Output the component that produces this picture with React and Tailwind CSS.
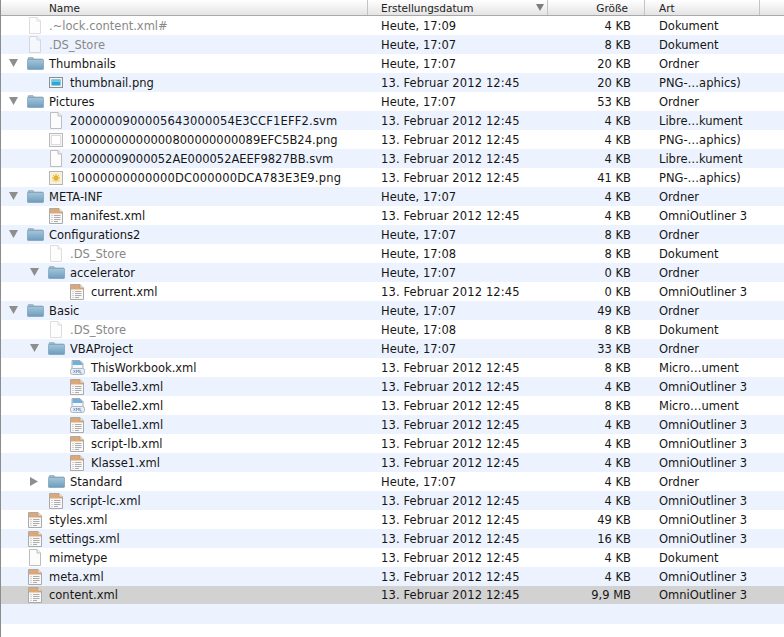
const FONT = 'font-["DejaVu_Sans",sans-serif]';

const ROWS = [
  { name: '.~lock.content.xml#', date: 'Heute, 17:09', size: '4 KB', kind: 'Dokument', level: 0, icon: 'file', dim: true },
  { name: '.DS_Store', date: 'Heute, 17:07', size: '8 KB', kind: 'Dokument', level: 0, icon: 'file', dim: true },
  { name: 'Thumbnails', date: 'Heute, 17:07', size: '20 KB', kind: 'Ordner', level: 0, icon: 'folder', open: true },
  { name: 'thumbnail.png', date: '13. Februar 2012 12:45', size: '20 KB', kind: 'PNG-…aphics)', level: 1, icon: 'thumb' },
  { name: 'Pictures', date: 'Heute, 17:07', size: '53 KB', kind: 'Ordner', level: 0, icon: 'folder', open: true },
  { name: '2000000900005643000054E3CCF1EFF2.svm', date: '13. Februar 2012 12:45', size: '4 KB', kind: 'Libre…kument', level: 1, icon: 'file', wide: true },
  { name: '10000000000000800000000089EFC5B24.png', date: '13. Februar 2012 12:45', size: '4 KB', kind: 'PNG-…aphics)', level: 1, icon: 'blank' },
  { name: '20000009000052AE000052AEEF9827BB.svm', date: '13. Februar 2012 12:45', size: '4 KB', kind: 'Libre…kument', level: 1, icon: 'file' },
  { name: '10000000000000DC000000DCA783E3E9.png', date: '13. Februar 2012 12:45', size: '41 KB', kind: 'PNG-…aphics)', level: 1, icon: 'sun', wide: true },
  { name: 'META-INF', date: 'Heute, 17:07', size: '4 KB', kind: 'Ordner', level: 0, icon: 'folder', open: true },
  { name: 'manifest.xml', date: '13. Februar 2012 12:45', size: '4 KB', kind: 'OmniOutliner 3', level: 1, icon: 'xml' },
  { name: 'Configurations2', date: 'Heute, 17:07', size: '8 KB', kind: 'Ordner', level: 0, icon: 'folder', open: true },
  { name: '.DS_Store', date: 'Heute, 17:08', size: '8 KB', kind: 'Dokument', level: 1, icon: 'file', dim: true },
  { name: 'accelerator', date: 'Heute, 17:07', size: '0 KB', kind: 'Ordner', level: 1, icon: 'folder', open: true },
  { name: 'current.xml', date: '13. Februar 2012 12:45', size: '0 KB', kind: 'OmniOutliner 3', level: 2, icon: 'xml' },
  { name: 'Basic', date: 'Heute, 17:07', size: '49 KB', kind: 'Ordner', level: 0, icon: 'folder', open: true },
  { name: '.DS_Store', date: 'Heute, 17:08', size: '8 KB', kind: 'Dokument', level: 1, icon: 'file', dim: true },
  { name: 'VBAProject', date: 'Heute, 17:07', size: '33 KB', kind: 'Ordner', level: 1, icon: 'folder', open: true },
  { name: 'ThisWorkbook.xml', date: '13. Februar 2012 12:45', size: '8 KB', kind: 'Micro…ument', level: 2, icon: 'excel' },
  { name: 'Tabelle3.xml', date: '13. Februar 2012 12:45', size: '4 KB', kind: 'OmniOutliner 3', level: 2, icon: 'xml' },
  { name: 'Tabelle2.xml', date: '13. Februar 2012 12:45', size: '8 KB', kind: 'Micro…ument', level: 2, icon: 'excel' },
  { name: 'Tabelle1.xml', date: '13. Februar 2012 12:45', size: '4 KB', kind: 'OmniOutliner 3', level: 2, icon: 'xml' },
  { name: 'script-lb.xml', date: '13. Februar 2012 12:45', size: '4 KB', kind: 'OmniOutliner 3', level: 2, icon: 'xml' },
  { name: 'Klasse1.xml', date: '13. Februar 2012 12:45', size: '4 KB', kind: 'OmniOutliner 3', level: 2, icon: 'xml' },
  { name: 'Standard', date: 'Heute, 17:07', size: '4 KB', kind: 'Ordner', level: 1, icon: 'folder', open: false },
  { name: 'script-lc.xml', date: '13. Februar 2012 12:45', size: '4 KB', kind: 'OmniOutliner 3', level: 1, icon: 'xml' },
  { name: 'styles.xml', date: '13. Februar 2012 12:45', size: '49 KB', kind: 'OmniOutliner 3', level: 0, icon: 'xml' },
  { name: 'settings.xml', date: '13. Februar 2012 12:45', size: '16 KB', kind: 'OmniOutliner 3', level: 0, icon: 'xml' },
  { name: 'mimetype', date: '13. Februar 2012 12:45', size: '4 KB', kind: 'Dokument', level: 0, icon: 'file' },
  { name: 'meta.xml', date: '13. Februar 2012 12:45', size: '4 KB', kind: 'OmniOutliner 3', level: 0, icon: 'xml' },
  { name: 'content.xml', date: '13. Februar 2012 12:45', size: '9,9 MB', kind: 'OmniOutliner 3', level: 0, icon: 'xml', selected: true },
];

const INDENT = ['pl-[27px]', 'pl-[48px]', 'pl-[69px]'];
const ARROW_INDENT = ['ml-[8px]', 'ml-[29px]', 'ml-[50px]'];
const CELL_TEXT = 'whitespace-nowrap leading-[14px]';

function PageIcon({ dim }) {
  return (
    <svg width="12" height="17" viewBox="0 0 12 17" className={`ml-[1px] ${dim ? 'opacity-50' : ''}`}>
      <path d="M.5.5h7.500l3.500 3.500v12.500h-11z" fill="#fcfcfc" stroke="#bdbdbd" />
      <path d="M8 .5v3.500h3.500" fill="#efefef" stroke="#bdbdbd" />
    </svg>
  );
}

function FolderIcon() {
  return (
    <svg width="17" height="13" viewBox="0 0 17 13" className="-ml-[1px]">
      <defs>
        <linearGradient id="folderBody" x1="0" y1="0" x2="0" y2="1">
          <stop offset="0" stopColor="#a6c6da" />
          <stop offset="1" stopColor="#6b9cbc" />
        </linearGradient>
      </defs>
      <path d="M1 3v-1.500q0-1 1-1h4l1.500 1.500h7.500q1 0 1 1v1z" fill="#9dbbce" stroke="#7a9db3" strokeWidth=".5" />
      <rect x=".4" y="2.400" width="16.200" height="10.200" rx="1" fill="url(#folderBody)" stroke="#6f93a9" strokeWidth=".6" />
    </svg>
  );
}

function ThumbIcon() {
  return (
    <svg width="14" height="11" viewBox="0 0 14 11">
      <rect x=".5" y=".5" width="13" height="10" fill="#f4f4f4" stroke="#8f8f8f" />
      <rect x="2.500" y="2.500" width="9" height="6" fill="#2fa6cf" />
      <rect x="2.500" y="2.500" width="9" height="2.500" fill="#6cc9e6" />
    </svg>
  );
}

function BlankIcon() {
  return (
    <svg width="14" height="14" viewBox="0 0 14 14">
      <rect x=".5" y=".5" width="13" height="13" fill="#f6f6f6" stroke="#bbb" />
      <rect x="2.500" y="2.500" width="9" height="9" fill="#fff" stroke="#dcdcdc" />
    </svg>
  );
}

function SunIcon() {
  return (
    <svg width="14" height="14" viewBox="0 0 14 14">
      <rect x=".5" y=".5" width="13" height="13" fill="#f6f3e6" stroke="#b5b5b5" />
      <rect x="2.500" y="2.500" width="9" height="9" fill="#f8edc2" />
      <circle cx="7" cy="7" r="2.500" fill="#dcab2a" />
      <path d="M7 3v8M3 7h8M4.200 4.200l5.600 5.600M9.800 4.200l-5.600 5.600" stroke="#e3b93c" strokeWidth=".9" />
    </svg>
  );
}

function XmlIcon() {
  return (
    <svg width="14" height="16" viewBox="0 0 14 16">
      <path d="M.5.5h9.500l3.500 3.500v11.500h-13z" fill="#f8f8f8" stroke="#aaa" />
      <path d="M1 1h9l3 3v1.500h-12z" fill="#dca878" />
      <path d="M10 .5v3.500h3.500" fill="#f0dfcc" stroke="#b99a78" strokeWidth=".7" />
      <path d="M2.500 7.500h1M5 7.500h6.500M2.500 9.500h1M5 9.500h6.500M2.500 11.500h1M5 11.500h6.500M2.500 13.500h1M5 13.500h4" stroke="#999" strokeWidth=".8" />
    </svg>
  );
}

function ExcelIcon() {
  return (
    <svg width="15" height="15" viewBox="0 0 15 15">
      <path d="M2 .5h8l3 3v6h-11z" fill="#f7f7f7" stroke="#aaa" />
      <path d="M2.500 1h7.500l2.500 2.500v1.500h-10z" fill="#6fb0de" />
      <rect x=".5" y="8.500" width="14" height="6" rx="2" fill="#e8eef5" stroke="#a9b6c4" />
      <path d="M3.500 10.200l1.800 2.600M5.300 10.200l-1.800 2.600M6.500 10v3M6.500 10l1.200 1.500 1.200-1.500v3M10 10v3h1.800" stroke="#4d78a8" strokeWidth=".6" fill="none" />
    </svg>
  );
}

const ICONS = {
  file: PageIcon,
  folder: FolderIcon,
  thumb: ThumbIcon,
  blank: BlankIcon,
  sun: SunIcon,
  xml: XmlIcon,
  excel: ExcelIcon,
};

function Arrow({ open }) {
  return open ? (
    <svg width="9" height="8" viewBox="0 0 9 8"><path d="M0 0h9l-4.500 8z" fill="#8e8e8e" /></svg>
  ) : (
    <svg width="8" height="9" viewBox="0 0 8 9"><path d="M0 0v9l8-4.500z" fill="#8e8e8e" /></svg>
  );
}

function Row({ row, index }) {
  const Icon = ICONS[row.icon];
  const bg = row.selected ? 'h-[18px] bg-[#d2d2d2]' : index % 2 === 1 ? 'h-[19px] bg-[#edf3fe]' : 'h-[19px] bg-white';
  const tone = row.dim ? 'text-[#888]' : 'text-[#161616]';
  const hasArrow = row.open !== undefined;
  const longDate = row.date.startsWith('13');

  return (
    <div className={`relative flex items-center ${bg}`}>
      {hasArrow && (
        <span className={`absolute left-0 top-[5px] flex ${ARROW_INDENT[row.level]}`}>
          <Arrow open={row.open} />
        </span>
      )}
      <div className={`flex w-[380px] shrink-0 items-center ${INDENT[row.level]}`}>
        <span className="flex w-[21px] shrink-0 items-center">
          <Icon dim={row.dim} />
        </span>
        <span className={`${CELL_TEXT} ${tone} ${row.wide ? 'tracking-[0.18px]' : ''}`}>{row.name}</span>
      </div>
      <span className={`w-[170px] shrink-0 text-[#161616] ${CELL_TEXT} ${longDate ? 'tracking-[0.13px]' : ''}`}>{row.date}</span>
      <span className={`w-[80px] shrink-0 text-right text-[#161616] ${CELL_TEXT}`}>{row.size}</span>
      <span className={`ml-[28px] text-[#161616] ${CELL_TEXT}`}>{row.kind}</span>
    </div>
  );
}

function HeaderCell({ className, children }) {
  return (
    <div className={`flex h-full shrink-0 items-center border-r border-[#c4c4c4] leading-[14px] ${className}`}>
      {children}
    </div>
  );
}

export default function App() {
  return (
    <div className={`h-[637px] w-[784px] overflow-hidden border-l border-[#8c8c8c] bg-white text-[11.5px] ${FONT}`}>
      <div className="flex h-[16px] border-b border-[#a9a9a9] bg-gradient-to-b from-white to-[#e4e4e4] text-[10.5px] text-[#222]">
        <HeaderCell className="w-[367px] pl-[48px]">Name</HeaderCell>
        <HeaderCell className="w-[180px] justify-between pl-[13px] pr-[3px]">
          Erstellungsdatum
          <svg width="8" height="7" viewBox="0 0 8 7"><path d="M0 0h8l-4 7z" fill="#7d7d7d" /></svg>
        </HeaderCell>
        <HeaderCell className="w-[97px] justify-end pr-[16px]">Größe</HeaderCell>
        <HeaderCell className="w-[115px] pl-[14px]">Art</HeaderCell>
      </div>
      {ROWS.map((row, i) => (
        <Row key={i} row={row} index={i} />
      ))}
      <div className="h-[20px] bg-[#edf3fe]" />
    </div>
  );
}
